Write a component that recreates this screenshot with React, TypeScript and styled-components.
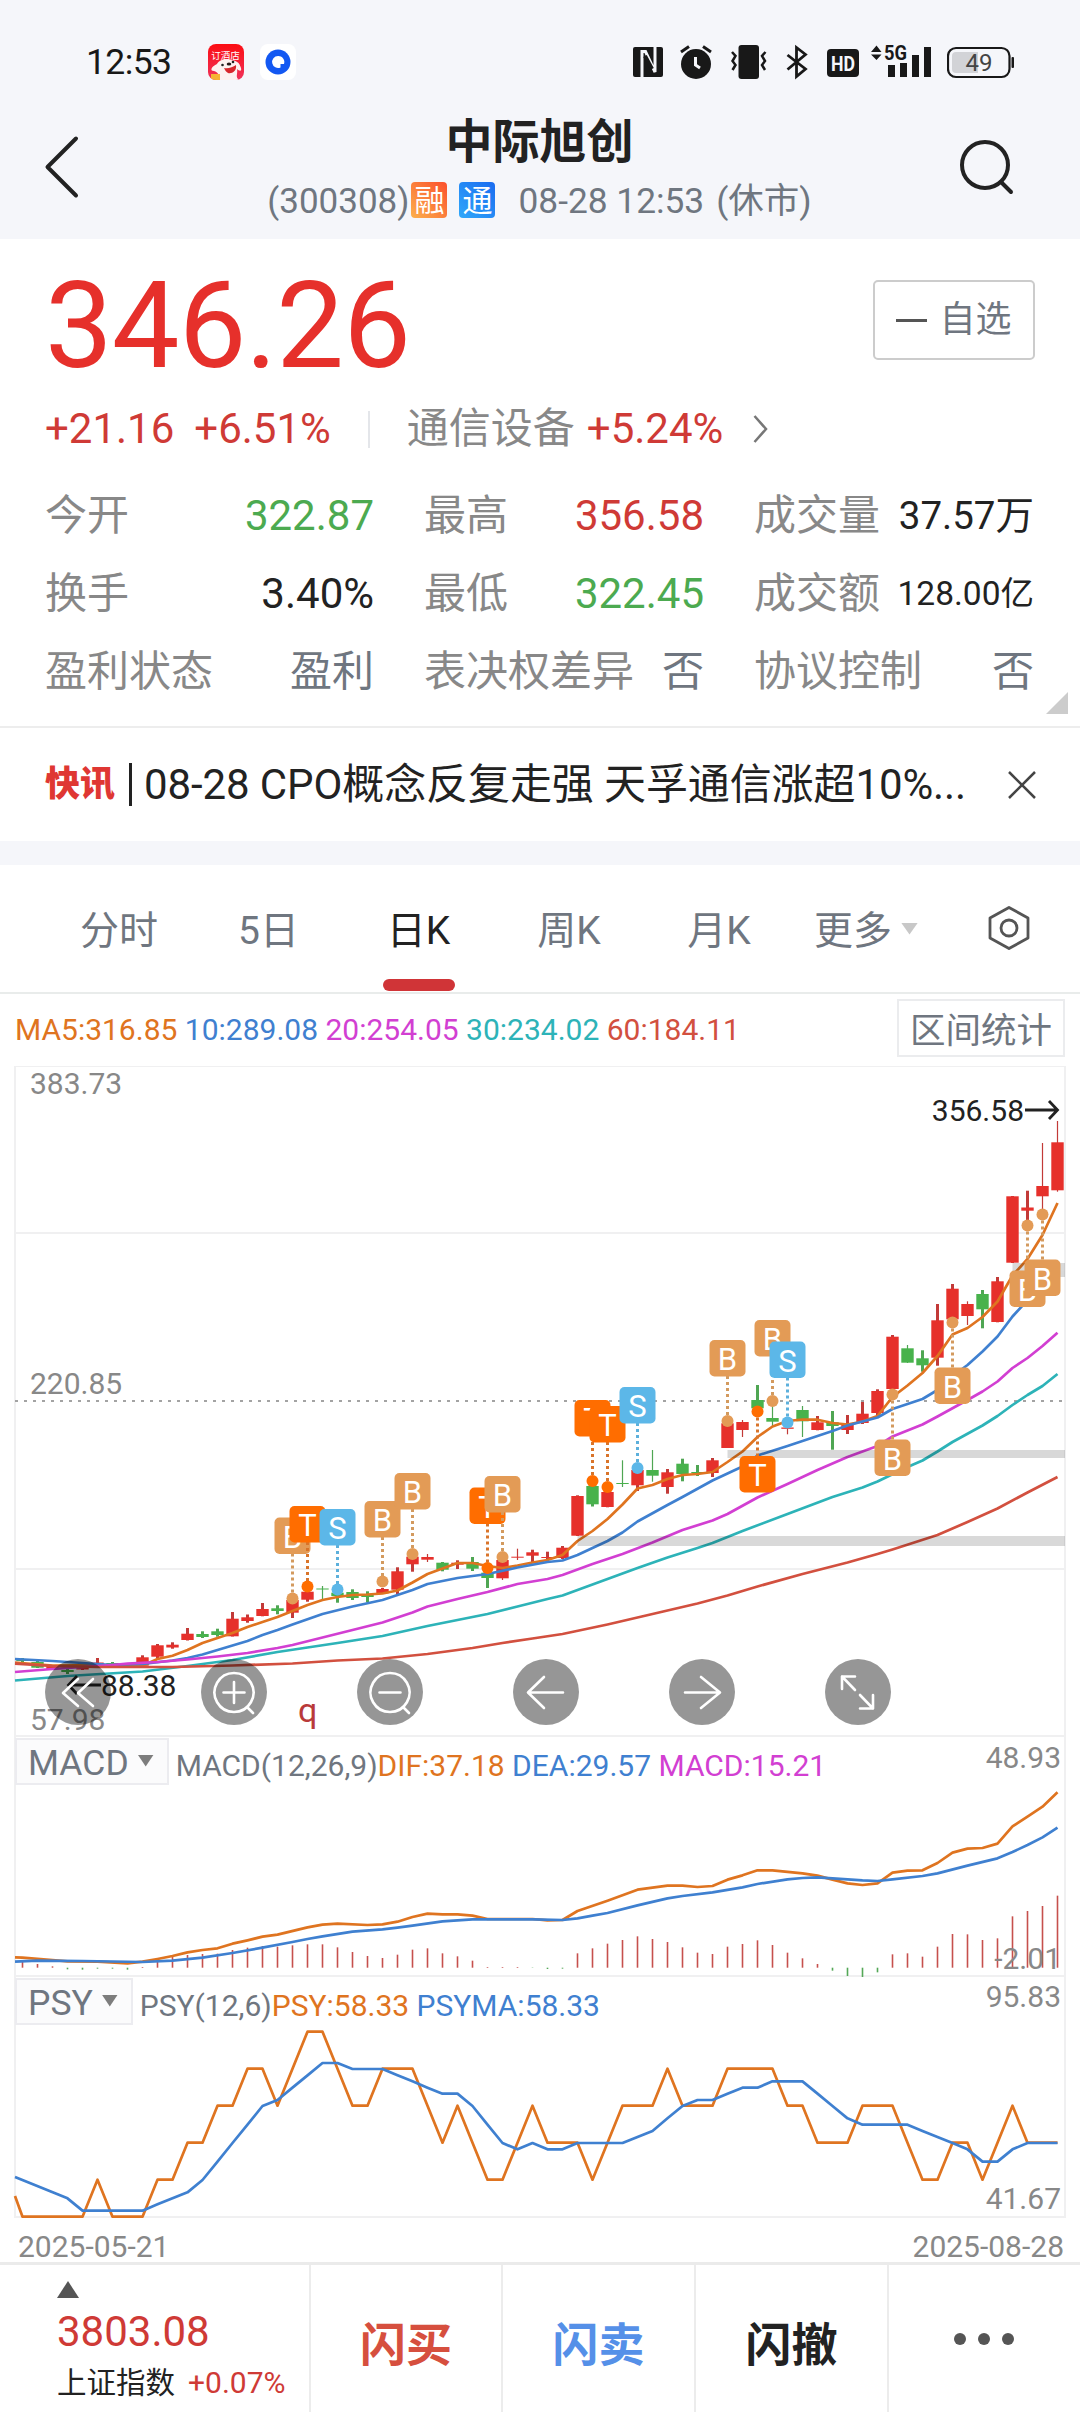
import React from 'react';
import styled, { createGlobalStyle } from 'styled-components';

const RED = '#cf3a36';
const GREEN = '#4caa50';
const GREY = '#888888';
const SLATE = '#6f7680';
const INK = '#222222';
const ORANGE = '#df7420';
const BLUE = '#3f80d0';
const MAGENTA = '#d23fd2';
const TEAL = '#2db3b8';
const BRICK = '#d2503f';
const LINE = '#f0f0f1';

const Global = createGlobalStyle`
  * { box-sizing: border-box; }
  body {
    margin: 0;
    background: #ffffff;
    font-family: Roboto, "Noto Sans CJK SC", sans-serif;
    color: ${INK};
  }
  svg { display: block; flex: none; }
`;

const Page = styled.main`
  width: 1080px;
  height: 2412px;
  display: flex;
  flex-direction: column;
  overflow: hidden;
`;

const Text = styled.span<{ $size: number; $color?: string; $weight?: number; $spacing?: number; $ml?: number }>`
  flex: none;
  font-size: ${p => p.$size}px;
  color: ${p => p.$color || INK};
  font-weight: ${p => p.$weight || 400};
  letter-spacing: ${p => p.$spacing || 0}px;
  margin-left: ${p => p.$ml || 0}px;
  white-space: pre;
`;

/* ---------- header ---------- */

const Header = styled.header`
  flex: none;
  height: 239px;
  background: #f5f6fa;
`;

const StatusBar = styled.div`
  display: flex;
  align-items: center;
  height: 113px;
  padding: 11px 66px 0 86px;
`;

const AppIcons = styled.div`
  display: flex;
  gap: 16px;
  margin-left: 37px;
`;

const StatusIcons = styled.div`
  display: flex;
  margin-left: auto;
`;

const StatusIcon = styled.svg<{ $ml?: number }>`
  height: 36px;
  margin-left: ${p => p.$ml || 0}px;
`;

const NavBar = styled.div`
  display: flex;
  justify-content: space-between;
  padding: 0 64px 0 42px;
`;

const NavSide = styled.div`
  display: flex;
  align-items: center;
  width: 60px;
  height: 108px;
`;

const Titles = styled.div`
  display: flex;
  flex-direction: column;
  align-items: center;
  padding: 1px 0 0 21px;
`;

const Title = styled.h1`
  margin: 0;
  font-size: 47px;
  font-weight: 700;
  line-height: 56px;
`;

const Subtitle = styled.div`
  display: flex;
  align-items: center;
  height: 63px;
  line-height: 63px;
`;

const Tag = styled.span<{ $from: string; $to: string; $ml: number }>`
  width: 36px;
  height: 36px;
  margin: -3px 0 0 ${p => p.$ml}px;
  border-radius: 4px;
  background: linear-gradient(45deg, ${p => p.$from}, ${p => p.$to});
  color: #fff;
  font-size: 30px;
  line-height: 38px;
  text-align: center;
`;

/* ---------- quote ---------- */

const Quote = styled.section`
  position: relative;
  flex: none;
  height: 489px;
  padding: 0 46px 0 45px;
  border-bottom: 2px solid #ededed;
`;

const PriceRow = styled.div`
  display: flex;
  justify-content: space-between;
  height: 169px;
  line-height: 174px;
`;

const WatchButton = styled.button`
  display: flex;
  align-items: center;
  justify-content: center;
  gap: 12px;
  width: 162px;
  height: 80px;
  margin: 41px -1px 0 0;
  border: 2px solid #cccccc;
  border-radius: 5px;
  background: #fff;
  font-family: inherit;
  line-height: 84px;
`;

const Dash = styled.i`
  width: 31px;
  height: 3px;
  background: #555;
`;

const ChangeRow = styled.div`
  display: flex;
  align-items: center;
  height: 42px;
  line-height: 42px;
`;

const Divider = styled.i`
  width: 2px;
  height: 37px;
  margin: 0 37px;
  background: #e4e6ea;
`;

const Stats = styled.dl`
  display: grid;
  grid-template-columns: 329px 280px 280px;
  column-gap: 50px;
  grid-auto-rows: 78px;
  margin: 26px 0 0;
  line-height: 80px;
`;

const Stat = styled.div`
  display: flex;
  justify-content: space-between;
`;

const Corner = styled.i`
  position: absolute;
  right: 12px;
  bottom: 12px;
  width: 22px;
  height: 22px;
  background: #cccccc;
  clip-path: polygon(100% 0, 100% 100%, 0 100%);
`;

const News = styled.section`
  display: flex;
  align-items: center;
  flex: none;
  height: 113px;
  padding: 0 44px 0 45px;
  line-height: 113px;
`;

const NewsBar = styled.i`
  width: 3px;
  height: 43px;
  margin: 0 12px 0 14px;
  background: ${INK};
`;

const Gap = styled.div`
  flex: none;
  height: 24px;
  background: #f5f6fa;
`;

/* ---------- period tabs ---------- */

const Tabs = styled.nav`
  display: flex;
  flex: none;
  height: 129px;
  padding-left: 44px;
  border-bottom: 2px solid #e9eceb;
`;

const Tab = styled.div<{ $width: number; $active?: boolean }>`
  display: flex;
  flex: none;
  flex-direction: column;
  align-items: center;
  width: ${p => p.$width}px;
  height: 127px;
  color: ${p => (p.$active ? INK : SLATE)};
  font-size: 39px;
  line-height: 130px;
`;

const TabLabel = styled.span<{ $top?: number }>`
  display: flex;
  align-items: center;
  height: 114px;
  white-space: nowrap;
  padding-top: ${p => (p.$top === undefined ? 17 : p.$top)}px;
`;

const Indicator = styled.i`
  width: 72px;
  height: 12px;
  border-radius: 6px;
  background: #d03437;
`;

const Triangle = styled.i<{ $w: number; $h: number; $color: string; $ml?: number; $mb?: number; $up?: boolean }>`
  flex: none;
  width: ${p => p.$w}px;
  height: ${p => p.$h}px;
  margin-left: ${p => p.$ml || 0}px;
  margin-bottom: ${p => p.$mb || 0}px;
  background: ${p => p.$color};
  clip-path: ${p => (p.$up ? 'polygon(50% 0, 100% 100%, 0 100%)' : 'polygon(0 0, 100% 0, 50% 100%)')};
`;

/* ---------- chart ---------- */

const Averages = styled.div`
  display: flex;
  align-items: flex-start;
  justify-content: space-between;
  flex: none;
  height: 72px;
  padding: 5px 15px 0 15px;
  line-height: 62px;
`;

const RangeButton = styled.div`
  width: 168px;
  height: 58px;
  border: 2px solid #ebecee;
  color: ${SLATE};
  font-size: 35.5px;
  line-height: 60px;
  text-align: center;
`;

const Panel = styled.section<{ $height: number }>`
  position: relative;
  flex: none;
  height: ${p => p.$height}px;
`;

const Legend = styled.div`
  position: absolute;
  left: 15px;
  top: 1px;
  display: flex;
  align-items: flex-start;
  line-height: 56px;
`;

const IndicatorButton = styled.div`
  display: flex;
  align-items: center;
  height: 47px;
  margin-right: 7px;
  padding: 3px 13px 0 11px;
  border: 2px solid #ececf0;
  background: #fbfbfc;
  line-height: 42px;
`;

const Controls = styled.div`
  position: absolute;
  left: 45px;
  top: 593px;
  display: flex;
  gap: 90px;
`;

const RoundButton = styled.div`
  width: 66px;
  height: 66px;
  border-radius: 50%;
  background: rgba(0, 0, 0, 0.41);
`;

const Dates = styled.div`
  display: flex;
  justify-content: space-between;
  flex: none;
  height: 44px;
  padding: 0 16px 0 18px;
  line-height: 57px;
`;

/* ---------- bottom bar ---------- */

const BottomBar = styled.footer`
  display: grid;
  grid-template-columns: 311px 192px 193px 193px 1fr;
  flex: none;
  height: 151px;
  border-top: 3px solid #ebebeb;
`;

const IndexCell = styled.div`
  display: flex;
  flex-direction: column;
  padding: 16px 0 0 57px;
  border-right: 2px solid #ececec;
`;

const IndexLine = styled.div<{ $height: number }>`
  display: flex;
  height: ${p => p.$height}px;
  line-height: ${p => p.$height}px;
`;

const Action = styled.div<{ $color: string }>`
  display: flex;
  align-items: center;
  justify-content: center;
  padding-top: 3px;
  border-right: 2px solid #ececec;
  color: ${p => p.$color};
  font-size: 46px;
  font-weight: 700;
`;

const Dots = styled.div`
  display: flex;
  align-items: center;
  justify-content: center;
  gap: 12px;
  padding: 0 2px 0 0;
`;

const Dot = styled.i`
  width: 12px;
  height: 12px;
  border-radius: 50%;
  background: #555;
`;

/* ---------- data ---------- */

const X0 = 22.5;
const STEP = 15;
const xAt = (i: number) => X0 + STEP * i;

type Candle = [up: 0 | 1, top: number, bottom: number, high: number, low: number, thin?: 1];

const candles: Candle[] = [
  [0, 1659, 1661, 1658, 1663], [0, 1662, 1667.7, 1661, 1668], [1, 1666, 1669, 1665, 1670], [0, 1670, 1672, 1667, 1674],
  [1, 1667, 1669.5, 1665, 1670], [1, 1662.5, 1666, 1658, 1667], [0, 1663, 1666.5, 1662, 1667], [0, 1666, 1667.5, 1665, 1668],
  [1, 1657.3, 1665.7, 1655.3, 1666], [1, 1645.3, 1656.7, 1644, 1658.5], [1, 1644.7, 1647.5, 1642.3, 1648.7],
  [1, 1633.7, 1640, 1628, 1640.5], [0, 1634, 1637, 1631.3, 1638], [0, 1631.3, 1635, 1628.7, 1636.7],
  [1, 1618.7, 1636.3, 1612, 1636.5], [1, 1617.3, 1621, 1614.5, 1622.7], [1, 1609, 1616, 1603, 1616.3],
  [0, 1608.3, 1611, 1605.3, 1614.3], [1, 1600, 1612.7, 1600, 1618], [1, 1591.7, 1599.7, 1590, 1601.7],
  [0, 1588.5, 1589.5, 1586, 1599, 1], [0, 1592.7, 1596, 1590, 1602.7], [0, 1592, 1598, 1589.3, 1600],
  [0, 1594.7, 1597, 1591.3, 1602.3], [1, 1589, 1593.3, 1588, 1594], [1, 1571.3, 1589.7, 1567.3, 1594],
  [1, 1556.7, 1564.3, 1556, 1571.7], [1, 1557, 1559.7, 1554, 1562, 1], [0, 1562.7, 1569.7, 1562, 1571.3],
  [1, 1562.7, 1564.7, 1560.3, 1569], [0, 1562, 1568.7, 1557, 1571], [0, 1572.7, 1578, 1572, 1588],
  [1, 1560, 1578.3, 1560, 1580, 1], [1, 1556.7, 1557.7, 1548.7, 1560, 1], [1, 1552.3, 1555.7, 1549.7, 1563.3],
  [1, 1557, 1558, 1551.7, 1562.3], [1, 1547.7, 1558, 1546, 1559], [1, 1496, 1535.7, 1495.3, 1536],
  [0, 1486, 1504.3, 1485, 1506.5], [1, 1492, 1507, 1490, 1507.3], [0, 1483, 1484, 1460.3, 1487, 1],
  [1, 1470, 1485.3, 1469, 1491], [0, 1470, 1475.7, 1450, 1481.7, 1], [1, 1472.3, 1487, 1469, 1493.7],
  [0, 1463.7, 1474, 1458.7, 1481.3], [0, 1472, 1473, 1465, 1476], [1, 1460.3, 1473, 1458, 1477],
  [1, 1423.3, 1448, 1422, 1448], [1, 1422, 1430, 1420, 1437, 1], [0, 1400, 1408.3, 1385, 1412],
  [0, 1418, 1421.7, 1405, 1426, 1], [1, 1427.5, 1428.8, 1424, 1434.3, 1], [0, 1410, 1421.3, 1406, 1437, 1],
  [1, 1422.3, 1430, 1416, 1430.3], [0, 1422.3, 1426, 1411, 1449.7], [1, 1425, 1430, 1415, 1434],
  [1, 1413.7, 1423, 1402, 1424], [1, 1391, 1413, 1389.3, 1417.7], [1, 1336.7, 1389, 1335, 1390],
  [0, 1348.3, 1362.7, 1345, 1363, 1], [0, 1358.3, 1365.3, 1350.3, 1371.7], [1, 1320.3, 1357.7, 1304, 1365.7],
  [1, 1288.7, 1319.3, 1284, 1320], [1, 1304, 1316, 1301.3, 1325, 1], [0, 1294, 1309.3, 1290, 1328.3],
  [1, 1281.3, 1322, 1277, 1322.3], [1, 1196.3, 1262.7, 1196, 1263], [1, 1207.5, 1210.7, 1190.7, 1221.7],
  [1, 1186, 1196.3, 1143, 1211.7, 1], [1, 1142.3, 1190.3, 1121, 1191.7, 1],
];

type Point = [number, number];
const LEFT = -0.5;

const ma60: Point[] = [[LEFT, 1663.7], [2, 1666], [5, 1667], [10, 1667], [14, 1665.5], [18, 1663.5], [21, 1660.5], [24, 1658.5], [27, 1654], [30, 1648], [32, 1643], [34, 1638.5], [36, 1634], [39, 1624.5], [42, 1614], [45, 1603.5], [47, 1595.5], [49, 1586.5], [52, 1574], [55, 1562.5], [57, 1554], [58, 1549.5], [61, 1535], [63, 1522], [65, 1508.5], [67, 1492.5], [69, 1477]];
const ma30: Point[] = [[LEFT, 1680.5], [3, 1676], [8, 1671.5], [11, 1666], [14, 1660], [17, 1652], [19, 1647.5], [21, 1643], [24, 1636], [27, 1626], [29, 1620], [31, 1614], [33, 1606.5], [35, 1599], [36, 1595.5], [38, 1584.5], [41, 1568], [43, 1557.5], [45, 1548], [46, 1543], [48, 1531], [51, 1514], [54, 1497], [56, 1487.5], [57, 1481.5], [59, 1467], [60, 1460.5], [61, 1451.5], [62, 1442], [64, 1425.5], [65, 1416], [66, 1405], [67, 1395], [68, 1386], [69, 1374]];
const ma20: Point[] = [[LEFT, 1672], [2, 1669], [4, 1667], [6, 1665], [7, 1663.7], [9, 1662], [11, 1659.5], [13, 1656.5], [15, 1653], [17, 1648], [18, 1645], [20, 1637.5], [22, 1630], [24, 1622.5], [26, 1612.5], [27, 1606.5], [29, 1599], [31, 1592], [33, 1584], [35, 1579], [36, 1575], [38, 1564], [40, 1554], [42, 1542.5], [44, 1530], [46, 1520.5], [47, 1514], [49, 1497.5], [51, 1484], [53, 1470], [55, 1457], [57, 1446], [58, 1436.5], [60, 1424.5], [61, 1416.5], [63, 1400], [64, 1391.5], [65, 1381.5], [66, 1368], [67, 1358], [68, 1346], [69, 1332.7]];
const ma10: Point[] = [[LEFT, 1659], [2, 1661], [4, 1663], [6, 1665], [8, 1664], [10, 1660.5], [11, 1658], [12, 1654.5], [13, 1650], [14, 1645.5], [15, 1641], [16, 1635], [17, 1630], [18, 1624.5], [20, 1614], [22, 1606.5], [24, 1600], [26, 1590], [27, 1584], [29, 1578], [31, 1574], [33, 1567.5], [35, 1562], [36, 1560.5], [37, 1555], [39, 1541], [40, 1532.5], [41, 1521.5], [43, 1505], [44, 1497], [46, 1480.5], [48, 1466.5], [49, 1455.5], [51, 1446], [52, 1441], [54, 1431], [55, 1425.5], [57, 1417.5], [58, 1409], [60, 1399], [61, 1390], [62, 1376], [63, 1365], [64, 1351.5], [65, 1336.5], [66, 1316.5], [67, 1300], [68, 1280], [69, 1261]];
const ma5: Point[] = [[LEFT, 1662.7], [2, 1665.7], [5, 1665], [8, 1665.7], [9, 1659], [10, 1655.7], [11, 1650], [12, 1643], [13, 1638], [14, 1633], [15, 1627], [16, 1622], [17, 1617], [18, 1611], [19, 1605], [20, 1600], [21, 1597], [22, 1595], [23, 1594.5], [24, 1593.5], [25, 1590.5], [26, 1582.5], [27, 1574], [28, 1568.5], [29, 1563], [30, 1563], [31, 1566], [32, 1568], [33, 1565.5], [34, 1562.5], [35, 1560], [36, 1555], [37, 1541], [38, 1531], [39, 1519], [40, 1504.5], [41, 1488.5], [42, 1485], [43, 1479], [44, 1475], [45, 1474], [46, 1472], [47, 1462], [48, 1451.5], [49, 1437], [50, 1426.5], [51, 1421], [52, 1419.5], [53, 1419.7], [54, 1423], [55, 1424.5], [56, 1421.5], [57, 1416], [58, 1397], [59, 1385.5], [60, 1373], [61, 1356], [62, 1334.5], [63, 1328], [64, 1317], [65, 1301.5], [66, 1275.5], [67, 1259], [68, 1235], [69, 1203]];

type Marker = { i: number; kind: 'B' | 'T' | 'S'; top: number; dot: number };
const markers: Marker[] = [
  { i: 18, kind: 'B', top: 1517.5, dot: 1598.5 },
  { i: 19, kind: 'T', top: 1506, dot: 1586.5 },
  { i: 21, kind: 'S', top: 1509, dot: 1589.5 },
  { i: 24, kind: 'B', top: 1501, dot: 1581.5 },
  { i: 26, kind: 'B', top: 1473, dot: 1554 },
  { i: 31, kind: 'T', top: 1487.5, dot: 1568 },
  { i: 32, kind: 'B', top: 1476, dot: 1557 },
  { i: 38, kind: 'T', top: 1400, dot: 1481 },
  { i: 39, kind: 'T', top: 1406, dot: 1487 },
  { i: 41, kind: 'S', top: 1387, dot: 1468 },
  { i: 47, kind: 'B', top: 1340, dot: 1421 },
  { i: 49, kind: 'T', top: 1456, dot: 1411.5 },
  { i: 50, kind: 'B', top: 1320, dot: 1401 },
  { i: 51, kind: 'S', top: 1341.5, dot: 1422.5 },
  { i: 58, kind: 'B', top: 1439.5, dot: 1394.5 },
  { i: 62, kind: 'B', top: 1367.5, dot: 1322.5 },
  { i: 67, kind: 'B', top: 1270.5, dot: 1225.5 },
  { i: 68, kind: 'B', top: 1259.5, dot: 1214.5 },
];
const markerFill = { B: '#e39b56', T: '#ff6d00', S: '#5cb7e8' };
const stemFill = { B: '#d39a5e', T: '#d9742a', S: '#5cb0dc' };

// indicator levels are stored in thirds of a pixel below the panel's base
const third = (base: number, v: number) => base + v / 3;

const dif: Point[] = [[LEFT, 682], [0, 683], [2, 690], [3, 694], [5, 695], [7, 700], [8, 695], [9, 687], [10, 678], [11, 667], [12, 660], [13, 655], [14, 641], [15, 631], [16, 620], [17, 614], [19, 592], [20, 584], [21, 581], [23, 585], [24, 583], [25, 575], [26, 561], [27, 551], [28, 553], [29, 553], [30, 557], [31, 567], [34, 567], [35, 571], [36, 570], [37, 543], [39, 512], [41, 479], [42, 473], [43, 467], [44, 467], [45, 471], [46, 468], [47, 449], [48, 436], [49, 421], [50, 421], [52, 430], [53, 437], [54, 449], [55, 460], [56, 465], [57, 460], [58, 428], [59, 422], [60, 421], [61, 399], [62, 368], [63, 356], [64, 354], [65, 341], [66, 289], [67, 260], [68, 230], [69, 187]];
const dea: Point[] = [[LEFT, 695], [1, 692], [4, 693], [8, 696], [10, 692], [12, 683], [14, 669], [16, 653], [18, 636], [19, 627], [20, 619], [22, 605], [24, 598], [25, 593], [26, 587], [28, 574], [30, 568], [34, 568], [36, 570], [37, 565], [38, 557], [39, 549], [41, 526], [43, 505], [44, 498], [46, 487], [48, 472], [49, 462], [51, 448], [52, 444], [53, 442], [54, 445], [56, 451], [57, 453], [58, 448], [60, 438], [61, 430], [63, 407], [65, 385], [66, 366], [67, 345], [68, 322], [69, 293]];
const bars = [695, 702, 709, 718, 719, 716, 716, 719, 711, 689, 681, 675, 672, 671, 660, 653, 648, 650, 646, 643, 643, 652, 666, 678, 684, 674, 659, 655, 670, 679, 692, 711, 711, 711, 714, 717, 716, 670, 655, 641, 630, 619, 627, 636, 652, 668, 672, 650, 642, 631, 645, 668, 685, 702, 722, 738, 741, 727, 673, 670, 680, 650, 612, 613, 630, 625, 559, 543, 528, 497];

const psy = [0, 0, 0, 0, 0, 1, 0, 0, 0, 1, 1, 2, 2, 3, 3, 4, 4, 3, 4, 5, 5, 4, 3, 3, 4, 4, 4, 3, 2, 3, 2, 1, 1, 2, 3, 2, 2, 2, 1, 2, 3, 3, 3, 4, 3, 3, 3, 4, 4, 4, 4, 3, 3, 2, 2, 2, 3, 3, 3, 2, 1, 1, 2, 2, 1, 2, 3, 2, 2, 2];
const psyPoints: Point[] = [[LEFT, 678], ...psy.map((v, i): Point => [i, 740 - v * 111])];
const psyMa: Point[] = [[LEFT, 621], [3, 685], [4, 722], [8, 722], [9, 703], [10, 685], [11, 667], [12, 630], [13, 575], [14, 519], [15, 464], [16, 408], [17, 390], [18, 353], [19, 316], [20, 279], [21, 279], [22, 297], [24, 297], [25, 316], [26, 334], [27, 353], [28, 371], [29, 371], [30, 408], [31, 464], [32, 519], [33, 538], [34, 519], [35, 538], [36, 538], [37, 519], [40, 519], [41, 501], [42, 483], [43, 445], [44, 408], [45, 390], [46, 390], [47, 371], [48, 353], [49, 353], [50, 334], [52, 334], [53, 371], [54, 408], [55, 445], [56, 464], [59, 464], [60, 483], [61, 501], [62, 519], [63, 538], [64, 575], [65, 575], [66, 538], [67, 519], [69, 519]];

const stats: [string, string, string, number?][] = [
  ['今开', '322.87', GREEN], ['最高', '356.58', RED], ['成交量', '37.57万', INK, 38.5],
  ['换手', '3.40%', INK], ['最低', '322.45', GREEN], ['成交额', '128.00亿', INK, 33.5],
  ['盈利状态', '盈利', SLATE], ['表决权差异', '否', SLATE], ['协议控制', '否', SLATE],
];

/* ---------- drawings ---------- */

const Curve = ({ points, color, base }: { points: Point[]; color: string; base?: number }) => (
  <polyline
    fill="none"
    stroke={color}
    strokeWidth={2.7}
    strokeLinejoin="round"
    points={points.map(([i, y]) => `${xAt(i)},${base === undefined ? y : third(base, y)}`).join(' ')}
  />
);

const Frame = ({ top, bottom }: { top: number; bottom: number }) => (
  <g stroke={LINE} strokeWidth={2}>
    <path d={`M15 ${top}V${bottom}M1065 ${top}V${bottom}M14 ${bottom}H1066`} fill="none" />
  </g>
);

const AxisText = ({ x, y, end, color = GREY, children }: { x: number; y: number; end?: boolean; color?: string; children: React.ReactNode }) => (
  <text x={x} y={y} fill={color} fontSize={30} fontFamily="Roboto, sans-serif" textAnchor={end ? 'end' : 'start'}>
    {children}
  </text>
);

const CandleShape = ({ c, i }: { c: Candle; i: number }) => {
  const [up, top, bottom, high, low, thin] = c;
  const fill = up ? '#e6302b' : '#48b24c';
  const wick = up ? '#c23a38' : '#4fa653';
  const x = xAt(i);
  const w = thin ? 1.2 : 3;
  return (
    <g>
      <rect x={x - w / 2} y={high} width={w} height={low - high} fill={wick} />
      <rect x={x - 6.2} y={top} width={12.4} height={bottom - top} fill={fill} />
    </g>
  );
};

const MarkerShape = ({ m }: { m: Marker }) => {
  const x = xAt(m.i);
  const below = m.top > m.dot;
  return (
    <g>
      <line x1={x} x2={x} y1={below ? m.dot : m.top + 36} y2={below ? m.top : m.dot} stroke={stemFill[m.kind]} strokeWidth={3} strokeDasharray="3 3" />
      <circle cx={x} cy={m.dot} r={6} fill={markerFill[m.kind]} />
      <rect x={x - 18} y={m.top} width={36} height={36.5} rx={5} fill={markerFill[m.kind]} />
      <text x={x} y={m.top + 30} fill="#fff" fontSize={31} fontFamily="Roboto, sans-serif" textAnchor="middle">{m.kind}</text>
    </g>
  );
};

const KLine = () => (
  <svg width="1080" height="671" viewBox="0 1066 1080 671">
    <path d="M14 1066H1066M15 1233H1065M15 1569H1065" stroke={LINE} strokeWidth={2} />
    <Frame top={1066} bottom={1736} />
    <path d="M15 1401H1065" stroke="#a3a3a3" strokeWidth={2} strokeDasharray="3 6" />
    <AxisText x={30} y={1094}>383.73</AxisText>
    <AxisText x={30} y={1394}>220.85</AxisText>
    <AxisText x={30} y={1729.5}>57.98</AxisText>
    {candles.map((c, i) => <CandleShape key={i} c={c} i={i} />)}
    <Curve points={ma5} color={ORANGE} />
    <Curve points={ma10} color={BLUE} />
    <Curve points={ma20} color={MAGENTA} />
    <Curve points={ma30} color={TEAL} />
    <Curve points={ma60} color={BRICK} />
    <g fill="#000" opacity={0.15}>
      <rect x={727.5} y={1450} width={337.5} height={8} />
      <rect x={577.5} y={1536} width={487.5} height={10} />
      <rect x={1012.5} y={1263} width={52.5} height={14} />
    </g>
    {markers.map(m => <MarkerShape key={m.i} m={m} />)}
    <AxisText x={1024} y={1121} end color={INK}>356.58</AxisText>
    <path d="M1025 1110H1057M1049 1101L1057.500 1110L1049 1119" fill="none" stroke={INK} strokeWidth={2.8} />
    <AxisText x={101} y={1695.5} color={INK}>88.38</AxisText>
    <path d="M101 1685H69M77 1676L68.500 1685L77 1694" fill="none" stroke={INK} strokeWidth={2.8} />
    <text x={298} y={1722} fill="#b93a3a" fontSize={34} fontFamily="Roboto, sans-serif">q</text>
  </svg>
);

const Macd = () => (
  <svg width="1080" height="240" viewBox="0 1737 1080 240">
    <Frame top={1737} bottom={1976} />
    <AxisText x={1061} y={1767.5} end>48.93</AxisText>
    {bars.map((v, i) => (
      <rect
        key={i}
        x={xAt(i) - 0.8}
        width={1.6}
        y={Math.min(third(1730, v), 1967.7)}
        height={Math.abs(third(1730, v) - 1967.7)}
        fill={v > 713 ? '#55a858' : '#c6504d'}
      />
    ))}
    <Curve points={dif} color={ORANGE} base={1730} />
    <Curve points={dea} color={BLUE} base={1730} />
    <AxisText x={1061} y={1969} end>-2.01</AxisText>
  </svg>
);

const Psy = () => (
  <svg width="1080" height="241" viewBox="0 1977 1080 241">
    <Frame top={1977} bottom={2217} />
    <AxisText x={1061} y={2007} end>95.83</AxisText>
    <Curve points={psyPoints} color={ORANGE} base={1970} />
    <Curve points={psyMa} color={BLUE} base={1970} />
    <AxisText x={1061} y={2209} end>41.67</AxisText>
  </svg>
);

const controlPaths = [
  'M33 20L18 34L33 47M48 20L33 34L48 47',
  'M33 14a19.500 19.500 0 1 0 .01 0zM46 48L52 54M33 23V44M22.500 33.500H43.500',
  'M33 14a19.500 19.500 0 1 0 .01 0zM46 48L52 54M22.500 33.500H43.500',
  'M50 33.500H16M31 18L15 33.500L31 49',
  'M16 33.500H50M32 18L51 33.500L32 49',
  'M17 30V17.500H30M17 17.500L30 31M35 36L48 49.500M48 36V49.500H35',
];

const Status = () => (
  <StatusIcons>
    <StatusIcon width="30" viewBox="632 44 30 36">
      <rect x="632" y="47" width="30" height="30" rx="2" fill="#181818" />
      <path d="M641 77V51.500L644.500 51.500L654 72V47" fill="none" stroke="#f5f6fa" strokeWidth="3" />
      <path d="M644 56L651 69" stroke="#181818" strokeWidth="4" />
    </StatusIcon>
    <StatusIcon $ml={17} width="32" viewBox="679 44 32 36">
      <circle cx="695" cy="64" r="15" fill="#181818" />
      <path d="M680 52L688 46.500M702 46.500L710 52" stroke="#181818" strokeWidth="3" />
      <path d="M694.500 57V65L699 68" fill="none" stroke="#f5f6fa" strokeWidth="3" />
    </StatusIcon>
    <StatusIcon $ml={19} width="36" viewBox="730 44 36 36">
      <rect x="737.500" y="45" width="20.500" height="34" rx="3" fill="#181818" />
      <path d="M731 52L734.500 56L731.500 61L734.500 65L731.500 70M764.500 52L761 56L764 61L761 65L764 70" fill="none" stroke="#181818" strokeWidth="2.500" />
    </StatusIcon>
    <StatusIcon $ml={19} width="22" viewBox="785 44 22 36">
      <path d="M786.500 55L804.500 69L795.500 76.500V47.500L804.500 54.500L786.500 69.500" fill="none" stroke="#181818" strokeWidth="2.800" />
    </StatusIcon>
    <StatusIcon $ml={19} width="32" viewBox="826 44 32 36">
      <rect x="826" y="49" width="32" height="28" rx="4" fill="#181818" />
      <text x="842" y="71" fontSize="21" fontWeight="700" fontFamily="Roboto, sans-serif" fill="#f5f6fa" textAnchor="middle" textLength="24" lengthAdjust="spacingAndGlyphs">HD</text>
    </StatusIcon>
    <StatusIcon $ml={12} width="60" viewBox="870 44 60 36">
      <path d="M870 52L875.500 45.500L880.500 52zM870 54.500L875.500 60L880.500 54.500z" fill="#181818" />
      <text x="883" y="60" fontSize="21" fontWeight="700" fontFamily="Roboto, sans-serif" fill="#181818" textLength="23" lengthAdjust="spacingAndGlyphs">5G</text>
      <path d="M887 65h7v12h-7zM899 63h7v14h-7zM911 55h7v22h-7zM923 47h7v30h-7z" fill="#181818" />
    </StatusIcon>
    <StatusIcon $ml={16} width="67" viewBox="946 44 67 36">
      <rect x="947" y="48" width="61.500" height="29" rx="8" fill="none" stroke="#181818" strokeWidth="2.200" />
      <path d="M955 52H977V73H955a4 4 0 0 1-4-4V56a4 4 0 0 1 4-4z" fill="#d2d3d7" />
      <rect x="1010.500" y="57" width="2.500" height="11" rx="1" fill="#181818" />
      <text x="978" y="71" fontSize="24" fontFamily="Roboto, sans-serif" fill="#444" textAnchor="middle">49</text>
    </StatusIcon>
  </StatusIcons>
);

const DealApp = () => (
  <svg width="36" height="36" viewBox="0 0 36 36">
    <defs>
      <clipPath id="deal"><rect width="36" height="36" rx="8" /></clipPath>
      <linearGradient id="dealBg" x1="0" y1="0" x2="0" y2="1">
        <stop offset="0" stopColor="#fb0d12" />
        <stop offset="1" stopColor="#f0325a" />
      </linearGradient>
    </defs>
    <g clipPath="url(#deal)">
      <rect width="36" height="36" fill="url(#dealBg)" />
      <path d="M9 36C12 31 10 28 6 27C1 27 4 22 9 20C11 16 17 14 23 16C29 17 31 18 33 24C34 28 31 27 29 25C30 30 27 33 31 36z" fill="#fdf1f0" />
      <circle cx="14.500" cy="21" r="1.300" fill="#222" />
      <circle cx="25" cy="18" r="1.300" fill="#222" />
      <ellipse cx="21" cy="20" rx="2.300" ry="1.500" fill="#2a1a1a" />
      <path d="M16 24C20 25 25 23 28 21C29 27 24 30 20 29C18 28 17 26 16 24z" fill="#d8262c" />
      <rect x="3" y="30" width="9" height="6" fill="#f6b333" />
      <text x="17.500" y="15" fontSize="9.500" fontFamily="Noto Sans CJK SC, sans-serif" fill="#fff" textAnchor="middle">订酒店</text>
    </g>
  </svg>
);

const BlueApp = () => (
  <svg width="36" height="36" viewBox="0 0 36 36">
    <rect width="36" height="36" rx="8" fill="#fff" />
    <circle cx="18" cy="18" r="12.500" fill="#1358f2" />
    <path d="M18 12a6 6 0 1 0 2.500 11.500V20H24A6 6 0 0 0 18 12z" fill="#fff" />
  </svg>
);

export default function App() {
  return (
    <Page>
      <Global />
      <Header>
        <StatusBar>
          <Text $size={35.5} $color="#181818" $spacing={-0.6}>12:53</Text>
          <AppIcons>
            <DealApp />
            <BlueApp />
          </AppIcons>
          <Status />
        </StatusBar>
        <NavBar>
          <NavSide>
            <svg width="40" height="64" viewBox="0 0 40 64">
              <path d="M34 3.500L5.500 32L34 60.500" fill="none" stroke={INK} strokeWidth="4" strokeLinecap="round" strokeLinejoin="round" />
            </svg>
          </NavSide>
          <Titles>
            <Title>中际旭创</Title>
            <Subtitle>
              <Text $size={35} $color={SLATE}>(300308)</Text>
              <Tag $ml={2} $from="#fcb04c" $to="#fb4f2c">融</Tag>
              <Tag $ml={12} $from="#30a8fa" $to="#1a6bf0">通</Tag>
              <Text $size={35.3} $color={SLATE} $ml={23}>08-28 12:53</Text>
              <Text $size={35.5} $color={SLATE} $ml={12}>(休市)</Text>
            </Subtitle>
          </Titles>
          <NavSide>
            <svg width="60" height="60" viewBox="0 0 60 60">
              <circle cx="29" cy="28" r="23" fill="none" stroke={INK} strokeWidth="4" />
              <path d="M45 45L55 55" stroke={INK} strokeWidth="4" strokeLinecap="round" />
            </svg>
          </NavSide>
        </NavBar>
      </Header>

      <Quote>
        <PriceRow>
          <Text $size={120.5} $color="#e6302b" $spacing={-0.9}>346.26</Text>
          <WatchButton>
            <Dash />
            <Text $size={36} $color={SLATE}>自选</Text>
          </WatchButton>
        </PriceRow>
        <ChangeRow>
          <Text $size={42} $color={RED}>+21.16</Text>
          <Text $size={42} $color={RED} $ml={20}>+6.51%</Text>
          <Divider />
          <Text $size={42} $color={GREY}>通信设备</Text>
          <Text $size={42} $color={RED} $ml={12}>+5.24%</Text>
          <svg width="50" height="30" viewBox="0 0 50 30">
            <path d="M31.500 2L43 15L31.500 28" fill="none" stroke="#777" strokeWidth="2.500" />
          </svg>
        </ChangeRow>
        <Stats>
          {stats.map(([label, value, color, size]) => (
            <Stat key={label}>
              <Text as="dt" $size={42} $color={GREY}>{label}</Text>
              <Text as="dd" $size={size || 42} $color={color}>{value}</Text>
            </Stat>
          ))}
        </Stats>
        <Corner />
      </Quote>

      <News>
        <Text $size={35} $color="#df3733" $weight={800}>快讯</Text>
        <NewsBar />
        <Text $size={42} $spacing={-0.1}>08-28 CPO概念反复走强 天孚通信涨超10%...</Text>
        <svg width="28" height="28" viewBox="0 0 28 28" style={{ marginLeft: 'auto' }}>
          <path d="M1 1L27 27M27 1L1 27" stroke="#444" strokeWidth="2.500" />
        </svg>
      </News>
      <Gap />

      <Tabs>
        <Tab $width={150}><TabLabel>分时</TabLabel></Tab>
        <Tab $width={149}><TabLabel>5日</TabLabel></Tab>
        <Tab $width={151} $active><TabLabel>日K</TabLabel><Indicator /></Tab>
        <Tab $width={150}><TabLabel>周K</TabLabel></Tab>
        <Tab $width={150}><TabLabel>月K</TabLabel></Tab>
        <Tab $width={144}>
          <TabLabel>更多<Triangle $w={17} $h={12} $color="#c8c8c8" $ml={9} $mb={4} /></TabLabel>
        </Tab>
        <Tab $width={142}>
          <TabLabel $top={12}>
            <svg width="44" height="46" viewBox="0 0 44 46">
              <path d="M22 2.500L41 13V33L22 43.500L3 33V13z" fill="none" stroke="#555" strokeWidth="2.800" strokeLinejoin="round" />
              <circle cx="22" cy="23" r="8" fill="none" stroke="#555" strokeWidth="2.800" />
            </svg>
          </TabLabel>
        </Tab>
      </Tabs>

      <Averages>
        <div>
          <Text $size={30} $color={ORANGE}>MA5:316.85 </Text>
          <Text $size={30} $color={BLUE}>10:289.08 </Text>
          <Text $size={30} $color={MAGENTA}>20:254.05 </Text>
          <Text $size={30} $color={TEAL}>30:234.02 </Text>
          <Text $size={30} $color={BRICK}>60:184.11</Text>
        </div>
        <RangeButton>区间统计</RangeButton>
      </Averages>

      <Panel $height={671}>
        <KLine />
        <Controls>
          {controlPaths.map((d, i) => (
            <RoundButton key={i}>
              <svg width="66" height="66" viewBox="0 0 66 66">
                <path d={d} fill="none" stroke="#fff" strokeWidth="2.600" strokeLinecap="round" strokeLinejoin="round" />
              </svg>
            </RoundButton>
          ))}
        </Controls>
      </Panel>

      <Panel $height={240}>
        <Macd />
        <Legend>
          <IndicatorButton>
            <Text $size={35.5} $color={SLATE}>MACD</Text>
            <Triangle $w={16} $h={12} $color="#7d7d7d" $ml={9} $mb={5} />
          </IndicatorButton>
          <Text $size={30} $color={SLATE}>MACD(12,26,9)</Text>
          <Text $size={30} $color={ORANGE}>DIF:37.18 </Text>
          <Text $size={30} $color={BLUE}>DEA:29.57 </Text>
          <Text $size={30} $color={MAGENTA}>MACD:15.21</Text>
        </Legend>
      </Panel>

      <Panel $height={241}>
        <Psy />
        <Legend>
          <IndicatorButton>
            <Text $size={35.5} $color={SLATE}>PSY</Text>
            <Triangle $w={16} $h={12} $color="#7d7d7d" $ml={9} $mb={5} />
          </IndicatorButton>
          <Text $size={30} $color={SLATE}>PSY(12,6)</Text>
          <Text $size={30} $color={ORANGE}>PSY:58.33 </Text>
          <Text $size={30} $color={BLUE}>PSYMA:58.33</Text>
        </Legend>
      </Panel>

      <Dates>
        <Text $size={30} $color={GREY}>2025-05-21</Text>
        <Text $size={30} $color={GREY}>2025-08-28</Text>
      </Dates>

      <BottomBar>
        <IndexCell>
          <Triangle $w={22} $h={17} $color="#555" $up />
          <IndexLine $height={68}><Text $size={42} $color={RED}>3803.08</Text></IndexLine>
          <IndexLine $height={34}>
            <Text $size={29.5}>上证指数</Text>
            <Text $size={30} $color={RED} $ml={13}>+0.07%</Text>
          </IndexLine>
        </IndexCell>
        <Action $color="#d64f3e">闪买</Action>
        <Action $color="#5590e8">闪卖</Action>
        <Action $color={INK}>闪撤</Action>
        <Dots><Dot /><Dot /><Dot /></Dots>
      </BottomBar>
    </Page>
  );
}
